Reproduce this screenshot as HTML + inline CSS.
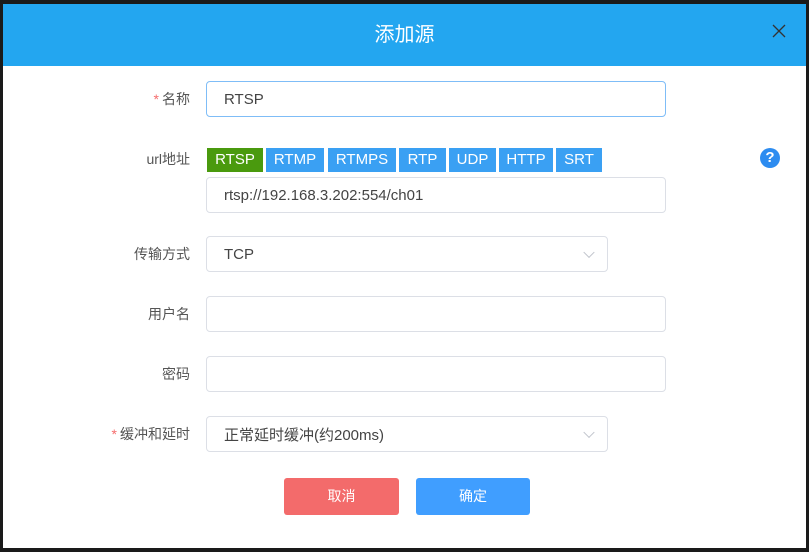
<!DOCTYPE html>
<html><head><meta charset="utf-8"><style>
*{box-sizing:border-box;margin:0;padding:0}
body{width:809px;height:552px;background:#1a1a1a;position:relative;overflow:hidden;font-family:"Liberation Sans","Noto Sans CJK SC",sans-serif;}
.dlg{position:absolute;left:3px;top:4px;width:803px;height:544px;background:#fff}
.hd{position:absolute;left:0;top:0;width:803px;height:62px;background:#23a6f0;color:#fff;font-size:20px;text-align:center;line-height:62px}
.x{position:absolute;right:20px;top:20px;width:14px;height:14px}
.lbl{position:absolute;right:616px;font-size:14px;color:#555;text-align:right;white-space:nowrap}
.lbl .s{color:#f56c6c;margin-right:3px}
.in{position:absolute;border:1px solid #dcdfe6;border-radius:4px;background:#fff;font-size:15px;color:#444;padding-left:17px;display:flex;align-items:center}
.tag{position:absolute;top:144px;height:24px;background:#3aa0f3;color:#fff;font-size:15px;line-height:24px;text-align:center}
.arr{position:absolute;right:14px;top:50%;width:8px;height:8px;border-right:1px solid #c0c4cc;border-bottom:1px solid #c0c4cc;transform:translateY(-70%) rotate(45deg)}
.btn{position:absolute;top:474px;height:37px;border-radius:3px;color:#fff;font-size:14px;text-align:center;line-height:37px}
</style></head><body>
<div class="dlg">
<div class="hd">添加源<svg class="x" viewBox="0 0 14 14"><path d="M1 1L13 13M13 1L1 13" stroke="#333" stroke-width="1.3"/></svg></div>
<div class="lbl" style="top:85px"><span class="s">*</span>名称</div>
<div class="in" style="left:203px;top:77px;width:460px;height:36px;border-color:#7fbdf7">RTSP</div>
<div class="lbl" style="top:145px">url地址</div>
<div class="tag" style="left:204px;width:56px;background:#4a9a0e">RTSP</div>
<div class="tag" style="left:263px;width:58px">RTMP</div>
<div class="tag" style="left:325px;width:68px">RTMPS</div>
<div class="tag" style="left:396px;width:47px">RTP</div>
<div class="tag" style="left:446px;width:47px">UDP</div>
<div class="tag" style="left:496px;width:54px">HTTP</div>
<div class="tag" style="left:553px;width:46px">SRT</div>
<div style="position:absolute;left:757px;top:144px;width:20px;height:20px;border-radius:50%;background:#2d8cf0;color:#fff;font-weight:bold;font-size:15px;text-align:center;line-height:20px">?</div>
<div class="in" style="left:203px;top:173px;width:460px;height:36px">rtsp://192.168.3.202:554/ch01</div>
<div class="lbl" style="top:240px">传输方式</div>
<div class="in" style="left:203px;top:232px;width:402px;height:36px">TCP<span class="arr"></span></div>
<div class="lbl" style="top:300px">用户名</div>
<div class="in" style="left:203px;top:292px;width:460px;height:36px"></div>
<div class="lbl" style="top:360px">密码</div>
<div class="in" style="left:203px;top:352px;width:460px;height:36px"></div>
<div class="lbl" style="top:420px"><span class="s">*</span>缓冲和延时</div>
<div class="in" style="left:203px;top:412px;width:402px;height:36px">正常延时缓冲(约200ms)<span class="arr"></span></div>
<div class="btn" style="left:281px;width:115px;background:#f36b6b">取消</div>
<div class="btn" style="left:413px;width:114px;background:#409eff">确定</div>
</div>
</body></html>
